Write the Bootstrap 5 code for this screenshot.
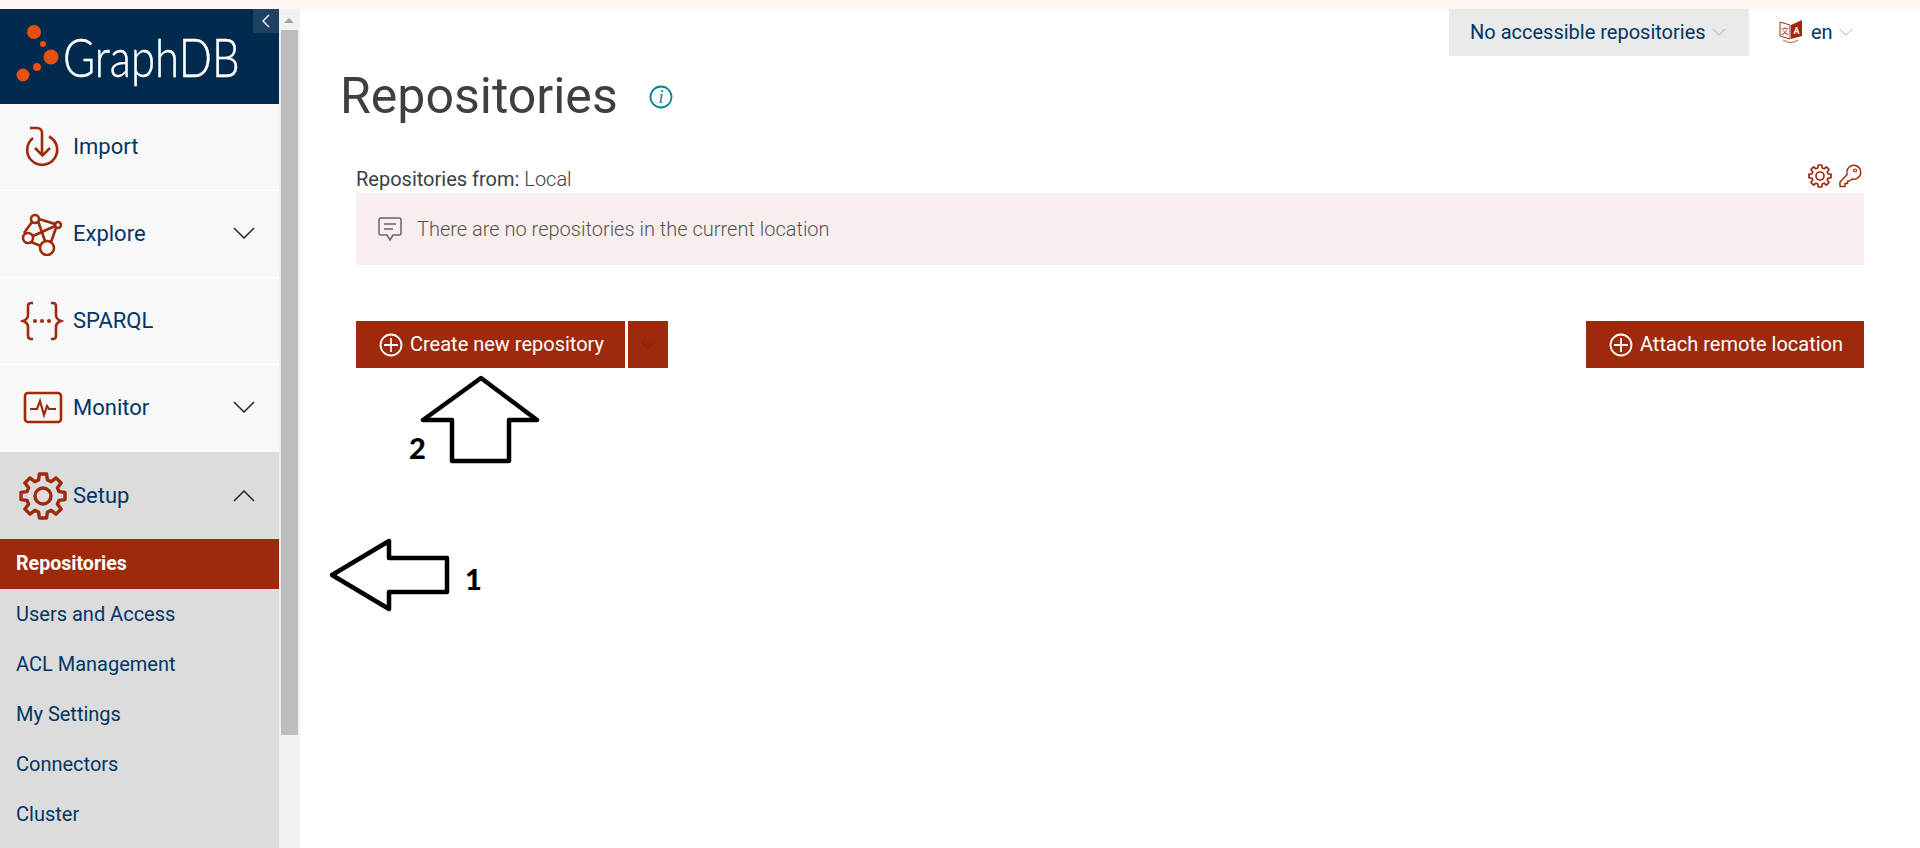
<!DOCTYPE html>
<html lang="en">
<head>
  <meta charset="UTF-8"/>
  <meta name="viewport" content="width=device-width, initial-scale=1.0"/>
  <title>Repositories</title>
  <link href="https://cdn.jsdelivr.net/npm/bootstrap@5.3.0/dist/css/bootstrap.min.css" rel="stylesheet"/>
  <style>
    html, body { height: 100%; overflow: hidden; }
    body { font-family: Roboto, "Liberation Sans", sans-serif; color: #3c4043; background: #fff; border-top: 9px solid #fff5f2; position: relative; }
    .page-wrap { height: 839px; }

    /* sidebar */
    .side-col { width: 279px; flex: 0 0 279px; height: 839px; overflow: hidden; background: #dcdcdc; }
    .logo-box { height: 95px; background: #002b4e; position: relative; flex: 0 0 95px; }
    .logo-text { position: absolute; left: 63px; top: 18px; font-family: Lato, sans-serif; font-weight: 300; font-size: 54px; line-height: 60px; color: #fff; -webkit-text-stroke: .5px #fff; transform: scaleX(.81); transform-origin: left center; }
    .logo-dots { position: absolute; left: 16px; top: 15px; }
    .collapse-btn { position: absolute; right: 0; top: 0; width: 26px; height: 24px; background: #1f4263; display: flex; align-items: center; justify-content: center; }
    .side-item { height: 87px; flex: 0 0 87px; background: #f8f8f8; color: #003663; font-size: 22px; border-bottom: 1px solid #fff; padding: 0 24px 2px 73px; position: relative; text-decoration: none; }
    .side-item.open { background: #dcdcdc; border-bottom: 0; padding-bottom: 0; }
    .side-icon { position: absolute; left: 18px; top: 50%; transform: translateY(-50%); }
    .side-sub { height: 50px; flex: 0 0 50px; padding-left: 16px; color: #003663; font-size: 20px; text-decoration: none; }
    .side-sub.current { background: #9e2a0b; color: #fff; font-weight: 700; font-size: 19.6px; }
    .scroll-col { width: 21px; flex: 0 0 21px; background: #f1f1f1; position: relative; }
    .scroll-up { width: 0; height: 0; border-left: 5px solid transparent; border-right: 5px solid transparent; border-bottom: 5px solid #a3a3a3; position: absolute; left: 5px; top: 9px; }
    .scroll-thumb { position: absolute; left: 2px; width: 17px; top: 21px; height: 705px; background: #bdbdbd; }

    /* main */
    .main-col { padding: 0 56px 0 40px; }
    .top-bar { height: 47px; margin-right: -56px; }
    .repo-select { width: 300px; height: 47px; background: #eaeaea; color: #003663; font-size: 20px; padding: 0 0 2px 21px; }
    .lang-box { width: 171px; padding: 0 0 2px 30px; color: #003663; font-size: 20px; }
    .caret-thin { margin-left: 6px; }
    .page-title { font-size: 50px; font-weight: 400; line-height: 56px; color: #3c4043; margin: 12px 0 0 0; }
    .info-mark { margin-left: 31px; margin-top: 14px; }
    .loc-row { margin: 41px 0 0 16px; height: 28px; font-size: 20px; line-height: 28px; }
    .loc-row .muted-val { font-weight: 300; }
    .loc-tools { margin-right: 2px; margin-top: -1px; }
    .key-ico { margin-left: 6px; }
    .empty-box { margin-left: 16px; height: 72px; background: #f7eeed; padding-left: 22px; color: #555; font-size: 20px; font-weight: 300; }
    .empty-ico { margin-right: 15px; }
    .btn-row { margin: 56px 0 0 16px; }
    .red-btn { background: #9e2a0b; border: 0; border-radius: 0; color: #fff; height: 47px; font-size: 20px; padding: 0 21px 2px 23px; }
    .red-btn:hover { background: #9e2a0b; color: #fff; }
    .red-caret { width: 40px; padding: 0; margin-left: 3px; }
    .plus-ico { margin-right: 7px; margin-top: 2px; }

    /* hand drawn notes on the screenshot */
    .notes { position: absolute; left: 0; top: -9px; pointer-events: none; }
    .note-num { position: absolute; font-family: Lato, sans-serif; font-weight: 900; font-size: 29px; line-height: 30px; color: #000; }
    .note-one { left: 465px; top: 555px; }
    .note-two { left: 409px; top: 424px; }
  </style>
</head>
<body>
<svg width="0" height="0" class="d-block position-absolute">
  <symbol id="gearIco" viewBox="0 0 24 24">
    <path fill="none" stroke="#9e2a0b" stroke-width="1.7" stroke-linejoin="round" d="M10.2 1H13.8L14.2 4L16.1 4.78L18.51 2.95L21.05 5.49L19.22 7.9L20 9.8L23 10.2V13.8L20 14.2L19.22 16.1L21.05 18.51L18.51 21.05L16.1 19.22L14.2 20L13.8 23H10.2L9.8 20L7.9 19.22L5.49 21.05L2.95 18.51L4.78 16.1L4 14.2L1 13.8V10.2L4 9.8L4.78 7.9L2.95 5.49L5.49 2.95L7.9 4.78L9.8 4Z"/>
    <circle cx="12" cy="12" r="4" fill="none" stroke="#9e2a0b" stroke-width="1.7"/>
  </symbol>
  <symbol id="plusIco" viewBox="0 0 24 24">
    <circle cx="12" cy="12" r="10.5" fill="none" stroke="#fff" stroke-width="1.8"/>
    <path d="M12 5V19M5 12H19" stroke="#fff" stroke-width="1.8"/>
  </symbol>
  <symbol id="downIco" viewBox="0 0 22 12">
    <path d="M1 1L11 11L21 1" fill="none" stroke="currentColor" stroke-width="1.5"/>
  </symbol>
</svg>

<div class="d-flex page-wrap">
  <!-- Sidebar -->
  <div class="side-col d-flex flex-column">
    <div class="logo-box">
      <svg class="logo-dots" width="46" height="60" viewBox="0 0 46 60">
        <g fill="#e9500e">
          <circle cx="18" cy="8" r="7"/>
          <circle cx="27" cy="20" r="3"/>
          <circle cx="35" cy="33" r="7.5"/>
          <circle cx="21" cy="43" r="4"/>
          <circle cx="7" cy="51" r="6.5"/>
        </g>
      </svg>
      <div class="logo-text">GraphDB</div>
      <div class="collapse-btn">
        <svg width="8" height="14" viewBox="0 0 8 14"><path d="M7 1L1 7L7 13" fill="none" stroke="#fff" stroke-width="1.4"/></svg>
      </div>
    </div>

    <a class="side-item d-flex align-items-center justify-content-between" href="#">
      <svg class="side-icon" width="40" height="44" viewBox="0 0 40 44" style="left:22px">
        <g fill="none" stroke="#9e2a0b" stroke-width="2.6">
          <path d="M11 13A15 15 0 1 0 27 11.5"/>
          <path d="M8 3H15C18 3 20 5 20 8V30"/>
          <path d="M13 23L20.5 30.5L28 23"/>
        </g>
      </svg>
      <span>Import</span>
    </a>
    <a class="side-item d-flex align-items-center justify-content-between" href="#">
      <svg class="side-icon" width="44" height="44" viewBox="0 0 44 44">
        <g fill="none" stroke="#9e2a0b" stroke-width="2.6">
          <circle cx="17" cy="7" r="4"/><circle cx="40" cy="13" r="3"/><circle cx="10" cy="26" r="5"/><circle cx="29" cy="36" r="7"/>
          <path d="M14 10L6 21M20 9L27 29M15 24L37 14M38 16L33 30M13 30L23 34M21 7L37 12"/>
        </g>
      </svg>
      <span>Explore</span>
      <svg width="22" height="12" class="text-dark"><use href="#downIco"/></svg>
    </a>
    <a class="side-item d-flex align-items-center justify-content-between" href="#">
      <svg class="side-icon" width="44" height="40" viewBox="0 0 44 40" style="left:20px">
        <g fill="none" stroke="#9e2a0b" stroke-width="2.6">
          <path d="M13 2H11C8 2 8 4 8 7V14C8 17 6 19 3 20C6 21 8 23 8 26V33C8 36 8 38 11 38H13"/>
          <path d="M31 2H33C36 2 36 4 36 7V14C36 17 38 19 41 20C38 21 36 23 36 26V33C36 36 36 38 33 38H31"/>
        </g>
        <g fill="#9e2a0b"><circle cx="15" cy="20" r="2"/><circle cx="22" cy="20" r="2"/><circle cx="29" cy="20" r="2"/></g>
      </svg>
      <span>SPARQL</span>
    </a>
    <a class="side-item d-flex align-items-center justify-content-between" href="#">
      <svg class="side-icon" width="44" height="34" viewBox="0 0 44 34" style="left:19px">
        <rect x="6" y="2" width="36" height="29" rx="3" fill="none" stroke="#9e2a0b" stroke-width="2.6"/>
        <path d="M11 18H18L21 10L25 24L28 15L30 18H37" fill="none" stroke="#9e2a0b" stroke-width="2.2"/>
      </svg>
      <span>Monitor</span>
      <svg width="22" height="12" class="text-dark"><use href="#downIco"/></svg>
    </a>
    <a class="side-item open d-flex align-items-center justify-content-between" href="#">
      <svg class="side-icon" width="48" height="48" style="left:19px"><use href="#gearIco"/></svg>
      <span>Setup</span>
      <svg width="22" height="12" class="text-dark" style="transform:scaleY(-1)"><use href="#downIco"/></svg>
    </a>
    <a class="side-sub current d-flex align-items-center" href="#">Repositories</a>
    <a class="side-sub d-flex align-items-center" href="#">Users and Access</a>
    <a class="side-sub d-flex align-items-center" href="#">ACL Management</a>
    <a class="side-sub d-flex align-items-center" href="#">My Settings</a>
    <a class="side-sub d-flex align-items-center" href="#">Connectors</a>
    <a class="side-sub d-flex align-items-center" href="#">Cluster</a>
  </div>
  <div class="scroll-col">
    <div class="scroll-up"></div>
    <div class="scroll-thumb"></div>
  </div>

  <!-- Main -->
  <div class="main-col flex-grow-1">
    <div class="top-bar d-flex justify-content-end">
      <div class="repo-select d-flex align-items-center">
        No accessible repositories
        <svg width="14" height="8" class="caret-thin" style="color:#aaa"><use href="#downIco"/></svg>
      </div>
      <div class="lang-box d-flex align-items-center">
        <svg width="24" height="26" viewBox="0 0 24 26" class="me-2">
          <path d="M1 3L11 6V20L1 17Z" fill="#fff" stroke="#9e2a0b" stroke-width="1"/>
          <path d="M12 6L23 1V17L12 20Z" fill="#9e2a0b"/>
          <text x="6" y="15" fill="#9e2a0b" font-size="8" text-anchor="middle" font-family="Noto Sans CJK SC, sans-serif">文</text>
          <text x="17.5" y="14.5" fill="#fff" font-size="9" font-weight="700" text-anchor="middle" font-family="Roboto, sans-serif">A</text>
          <path d="M4 21Q12 26 19 21" fill="none" stroke="#c0522f" stroke-width="1"/>
        </svg>
        en
        <svg width="14" height="8" class="caret-thin" style="color:#aaa"><use href="#downIco"/></svg>
      </div>
    </div>

    <div class="d-flex align-items-center">
      <h1 class="page-title">Repositories</h1>
      <svg class="info-mark" width="24" height="24" viewBox="0 0 24 24">
        <circle cx="12" cy="12" r="10.5" fill="none" stroke="#00888a" stroke-width="1.8"/>
        <text x="12" y="18" fill="#00888a" font-size="18" font-style="italic" text-anchor="middle" font-family="Liberation Serif, serif">i</text>
      </svg>
    </div>

    <div class="loc-row d-flex justify-content-between align-items-start">
      <div>Repositories from: <span class="muted-val">Local</span></div>
      <div class="loc-tools d-flex">
        <svg width="24" height="24"><use href="#gearIco"/></svg>
        <svg width="24" height="24" viewBox="0 0 24 24" class="key-ico">
          <path d="M9.2 10.5A7 7 0 1 1 14 15L11.5 17H9.5V19.5H7V22.5H2V18Z" fill="none" stroke="#9e2a0b" stroke-width="1.5" stroke-linejoin="round"/>
          <circle cx="17" cy="6.5" r="1.5" fill="none" stroke="#9e2a0b" stroke-width="1.2"/>
        </svg>
      </div>
    </div>

    <div class="empty-box d-flex align-items-center">
      <svg width="24" height="26" viewBox="0 0 24 26" class="empty-ico flex-shrink-0">
        <path d="M3 2H21Q23 2 23 4V17Q23 19 21 19H15L12 24L9 19H3Q1 19 1 17V4Q1 2 3 2Z" fill="none" stroke="#6b6563" stroke-width="1.5"/>
        <path d="M6 8H18M6 13H15" stroke="#6b6563" stroke-width="1.5"/>
      </svg>
      There are no repositories in the current location
    </div>

    <div class="btn-row d-flex justify-content-between">
      <div class="d-flex">
        <button class="btn red-btn d-flex align-items-center" type="button">
          <svg width="24" height="24" class="plus-ico"><use href="#plusIco"/></svg>
          Create new repository
        </button>
        <button class="btn red-btn red-caret d-flex align-items-center justify-content-center" type="button">
          <svg width="14" height="8" style="color:#6f2410"><use href="#downIco"/></svg>
        </button>
      </div>
      <button class="btn red-btn d-flex align-items-center" type="button">
        <svg width="24" height="24" class="plus-ico"><use href="#plusIco"/></svg>
        Attach remote location
      </button>
    </div>
  </div>
</div>

<!-- arrows and numbers drawn over the screenshot -->
<svg class="notes" width="1920" height="848" viewBox="0 0 1920 848">
  <g fill="none" stroke="#000" stroke-width="4.5" stroke-linejoin="round">
    <path d="M481 378L423 420H452V461H509V420H537Z"/>
    <path d="M332 575L389 541V558H447V592H389V609Z"/>
  </g>
</svg>
<span class="note-num note-one">1</span>
<span class="note-num note-two">2</span>
</body>
</html>
